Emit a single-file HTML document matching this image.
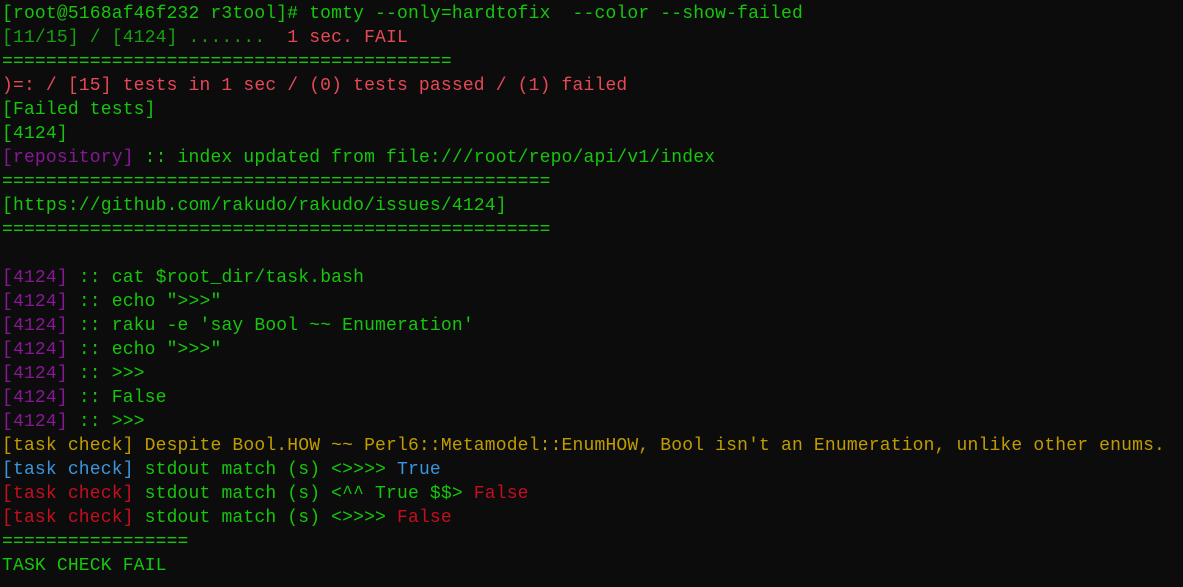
<!DOCTYPE html>
<html><head><meta charset="utf-8"><style>
html,body{margin:0;padding:0;background:#0c0c0c;width:1183px;height:587px;overflow:hidden}
pre{margin:0;padding:2px 0 0 2px;font-family:"Liberation Mono",monospace;font-size:18px;letter-spacing:0.17px;line-height:24px;color:#16c60c;white-space:pre}
.g{color:#13a10e}.r{color:#e74856}.p{color:#881798}.y{color:#c19c00}.b{color:#3a96dd}.d{color:#c50f1f}
</style></head><body><pre>[root@5168af46f232 r3tool]# tomty --only=hardtofix  --color --show-failed
<span class="g">[11/15] / [4124] .......  </span><span class="r">1 sec. FAIL</span>
=========================================
<span class="r">)=: / [15] tests in 1 sec / (0) tests passed / (1) failed</span>
[Failed tests]
[4124]
<span class="p">[repository]</span> :: index updated from file:///root/repo/api/v1/index
==================================================
[https://github.com/rakudo/rakudo/issues/4124]
==================================================

<span class="p">[4124]</span> :: cat $root_dir/task.bash
<span class="p">[4124]</span> :: echo "&gt;&gt;&gt;"
<span class="p">[4124]</span> :: raku -e 'say Bool ~~ Enumeration'
<span class="p">[4124]</span> :: echo "&gt;&gt;&gt;"
<span class="p">[4124]</span> :: &gt;&gt;&gt;
<span class="p">[4124]</span> :: False
<span class="p">[4124]</span> :: &gt;&gt;&gt;
<span class="y">[task check] Despite Bool.HOW ~~ Perl6::Metamodel::EnumHOW, Bool isn't an Enumeration, unlike other enums.</span>
<span class="b">[task check]</span> stdout match (s) &lt;&gt;&gt;&gt;&gt; <span class="b">True</span>
<span class="d">[task check]</span> stdout match (s) &lt;^^ True $$&gt; <span class="d">False</span>
<span class="d">[task check]</span> stdout match (s) &lt;&gt;&gt;&gt;&gt; <span class="d">False</span>
=================
TASK CHECK FAIL</pre></body></html>
